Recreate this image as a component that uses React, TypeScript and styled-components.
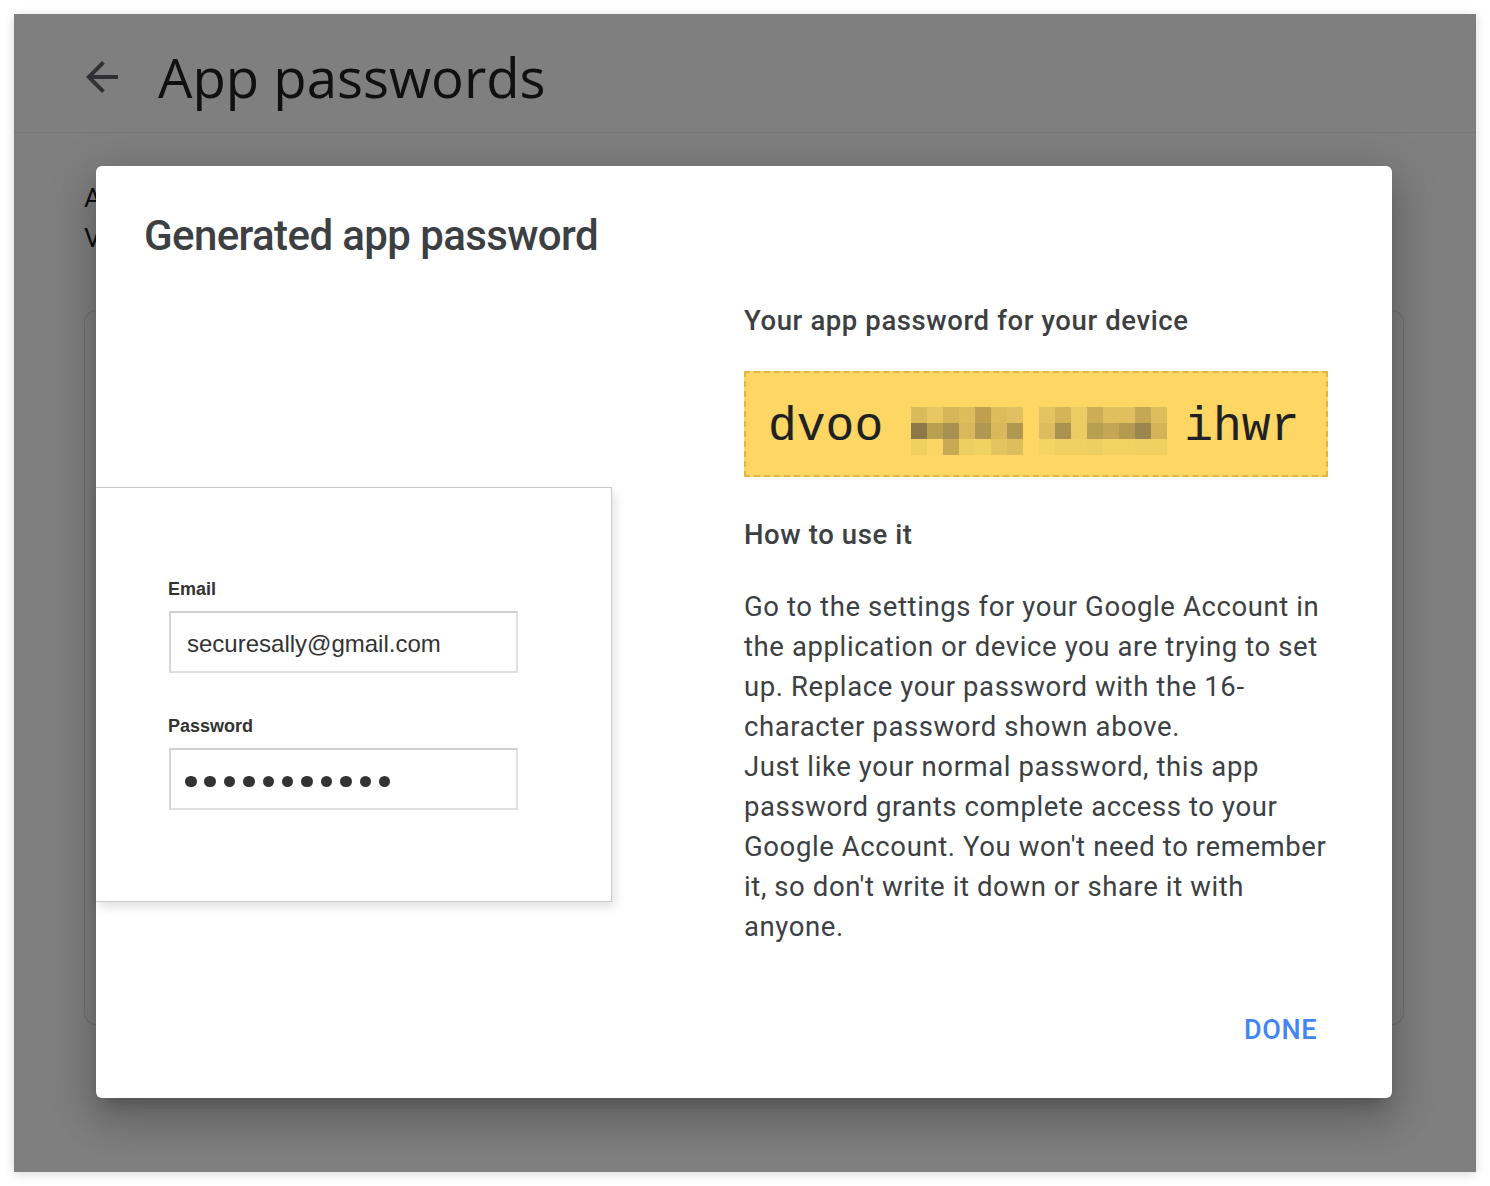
import React from "react";
import styled, { createGlobalStyle } from "styled-components";

const GlobalStyle = createGlobalStyle`
  html, body { margin: 0; padding: 0; background: #ffffff; }
  body { font-family: Roboto, "Liberation Sans", sans-serif; }
  * { box-sizing: border-box; }
`;

const Frame = styled.div`
  padding: 14px;
  width: 1490px;
  height: 1186px;
`;

const Window = styled.div`
  position: relative;
  width: 1462px;
  height: 1158px;
  overflow: hidden;
  background: #ffffff;
  box-shadow: 0 2px 10px rgba(0, 0, 0, 0.16);
`;

const Header = styled.header`
  height: 119px;
  border-bottom: 1px solid #e8eaed;
  display: flex;
  align-items: center;
  padding: 8px 0 0 64px;
`;

const BackIcon = styled.svg`
  width: 48px;
  height: 48px;
  margin-right: 32px;
  fill: #5f6368;
`;

const PageTitle = styled.h1`
  margin: 0;
  font-family: "Open Sans", Roboto, sans-serif;
  font-weight: 400;
  font-size: 54.5px;
  line-height: 64px;
  color: #202124;
`;

const Content = styled.main`
  padding: 45px 72px 0 70px;
`;

const Intro = styled.div`
  font-size: 26.7px;
  line-height: 40px;
  color: #202124;
  white-space: nowrap;
`;

const Card = styled.section`
  margin-top: 52px;
  height: 715px;
  border: 1px solid #dadce0;
  border-radius: 12px;
`;

const Scrim = styled.div`
  position: absolute;
  inset: 0;
  background: rgba(0, 0, 0, 0.5);
`;

const Dialog = styled.div`
  position: absolute;
  left: 82px;
  top: 152px;
  width: 1296px;
  height: 932px;
  background: #ffffff;
  border-radius: 6px;
  box-shadow: 0 11px 15px -7px rgba(0, 0, 0, 0.2), 0 24px 38px 3px rgba(0, 0, 0, 0.14),
    0 9px 46px 8px rgba(0, 0, 0, 0.12);
  display: flex;
  flex-direction: column;
`;

const DialogTitle = styled.h2`
  margin: 0;
  padding: 44px 0 0 48px;
  font-size: 42px;
  line-height: 52px;
  letter-spacing: -0.6px;
  font-weight: 500;
  color: #3c4043;
`;

const Body = styled.div`
  display: grid;
  grid-template-columns: 516px 584px;
  column-gap: 132px;
  align-items: start;
`;

const Illustration = styled.div`
  margin-top: 225px;
  height: 415px;
  background: #ffffff;
  border: 1px solid #c9c9c9;
  border-left: none;
  box-shadow: 3px 5px 10px rgba(0, 0, 0, 0.12);
  padding: 90px 0 0 73px;
  font-family: "Liberation Sans", Arial, sans-serif;
`;

const FieldLabel = styled.div<{ $gap: number }>`
  margin-top: ${(p) => p.$gap}px;
  margin-left: -1px;
  font-size: 18px;
  line-height: 22px;
  font-weight: 700;
  color: #333333;
`;

const FieldBox = styled.div`
  margin-top: 11px;
  width: 349px;
  height: 62px;
  border: 2px solid #e0e0e0;
  border-top-color: #d0d0d0;
  border-left-color: #d6d6d6;
  padding: 3px 0 0 16px;
  display: flex;
  align-items: center;
  font-size: 24px;
  color: #333333;
`;

const Dots = styled.div`
  display: flex;
  gap: 7.9px;
  padding-top: 2px;
  margin-left: -2px;
`;

const Dot = styled.span`
  width: 11.5px;
  height: 11.5px;
  border-radius: 50%;
  background: #333333;
`;

const Info = styled.div`
  padding-top: 39px;
`;

const SubHeading = styled.h3<{ $gap: number }>`
  margin: ${(p) => p.$gap}px 0 0;
  font-size: 27.5px;
  line-height: 40px;
  letter-spacing: 0.6px;
  font-weight: 500;
  color: #3c4043;
`;

const PasswordBox = styled.div`
  margin-top: 30px;
  height: 106px;
  background: #fdd663;
  border: 2px dashed #dcb64c;
  display: flex;
  align-items: center;
  padding: 6px 0 0 22px;
  font-family: "Liberation Mono", "Courier New", monospace;
  font-size: 48px;
  color: #202124;
`;

const Chunk = styled.span<{ $gap: number }>`
  margin-right: ${(p) => p.$gap}px;
`;

const Pixels = styled.svg<{ $gap: number }>`
  display: block;
  margin: 8px ${(p) => p.$gap}px 0 0;
`;

const Paragraph = styled.p<{ $gap: number }>`
  margin: ${(p) => p.$gap}px 0 0;
  font-size: 27.5px;
  line-height: 40px;
  letter-spacing: 0.6px;
  color: #3c4043;
`;

const Footer = styled.div`
  margin-top: auto;
  display: flex;
  justify-content: flex-end;
  padding: 0 63px 41px 0;
`;

const DoneButton = styled.button`
  height: 54px;
  padding: 0 12px;
  border: none;
  background: transparent;
  font-family: Roboto, sans-serif;
  font-size: 27px;
  font-weight: 500;
  letter-spacing: 0.6px;
  color: #4285f4;
  cursor: pointer;
`;

const blockA = [
  ["#d8bb5a", "#e8c760", "#d4b558", "#dcbc5c", "#bfa050", "#dcbc5c", "#e0c060"],
  ["#8c7848", "#b8a050", "#a89050", "#d8b858", "#b09850", "#d8b858", "#b09850"],
  ["#f0d060", "#fcd663", "#c8aa54", "#ecce62", "#f0d262", "#e4c45c", "#dcbe5c"],
];

const blockB = [
  ["#e4c460", "#d4b458", "#eccc62", "#ccae56", "#e0c05e", "#e0c05e", "#c4a854", "#dcbe5c"],
  ["#dcbc5c", "#ac9250", "#eccc62", "#b8a052", "#c4a654", "#b49a50", "#9c8650", "#d4b458"],
  ["#f4d462", "#f0d062", "#f0d062", "#ecce62", "#f2d262", "#f2d262", "#f0d062", "#f0d062"],
];

function PixelBlock({ cells, gap }: { cells: string[][]; gap: number }) {
  const cols = cells[0].length;
  return (
    <Pixels $gap={gap} width={cols * 16} height={48} viewBox={`0 0 ${cols * 16} 48`}>
      {cells.map((row, r) =>
        row.map((c, i) => <rect key={`${r}-${i}`} x={i * 16} y={r * 16} width={16} height={16} fill={c} />)
      )}
    </Pixels>
  );
}

export default function App() {
  return (
    <>
      <GlobalStyle />
      <Frame>
        <Window>
          <Header>
            <BackIcon viewBox="0 0 24 24">
              <path d="M20 11H7.83l5.59-5.59L12 4l-8 8 8 8 1.41-1.41L7.83 13H20v-2z" />
            </BackIcon>
            <PageTitle>App passwords</PageTitle>
          </Header>
          <Content>
            <Intro>App passwords let you sign in to your Google Account from apps on devices that don't support 2-Step</Intro>
            <Intro>Verification. You'll only need to enter it once so you don't need to remember it.</Intro>
            <Card />
          </Content>
          <Scrim />
          <Dialog>
            <DialogTitle>Generated app password</DialogTitle>
            <Body>
              <Illustration>
                <FieldLabel $gap={0}>Email</FieldLabel>
                <FieldBox>securesally@gmail.com</FieldBox>
                <FieldLabel $gap={42}>Password</FieldLabel>
                <FieldBox>
                  <Dots>
                    {Array.from({ length: 11 }).map((_, i) => (
                      <Dot key={i} />
                    ))}
                  </Dots>
                </FieldBox>
              </Illustration>
              <Info>
                <SubHeading $gap={0}>Your app password for your device</SubHeading>
                <PasswordBox>
                  <Chunk $gap={28}>dvoo</Chunk>
                  <PixelBlock cells={blockA} gap={16} />
                  <PixelBlock cells={blockB} gap={17} />
                  <Chunk $gap={0}>ihwr</Chunk>
                </PasswordBox>
                <SubHeading $gap={38}>How to use it</SubHeading>
                <Paragraph $gap={32}>
                  Go to the settings for your Google Account in the application or device you are trying to set up.
                  Replace your password with the 16-character password shown above.
                </Paragraph>
                <Paragraph $gap={0}>
                  Just like your normal password, this app password grants complete access to your Google Account. You
                  won't need to remember it, so don't write it down or share it with anyone.
                </Paragraph>
              </Info>
            </Body>
            <Footer>
              <DoneButton>DONE</DoneButton>
            </Footer>
          </Dialog>
        </Window>
      </Frame>
    </>
  );
}
